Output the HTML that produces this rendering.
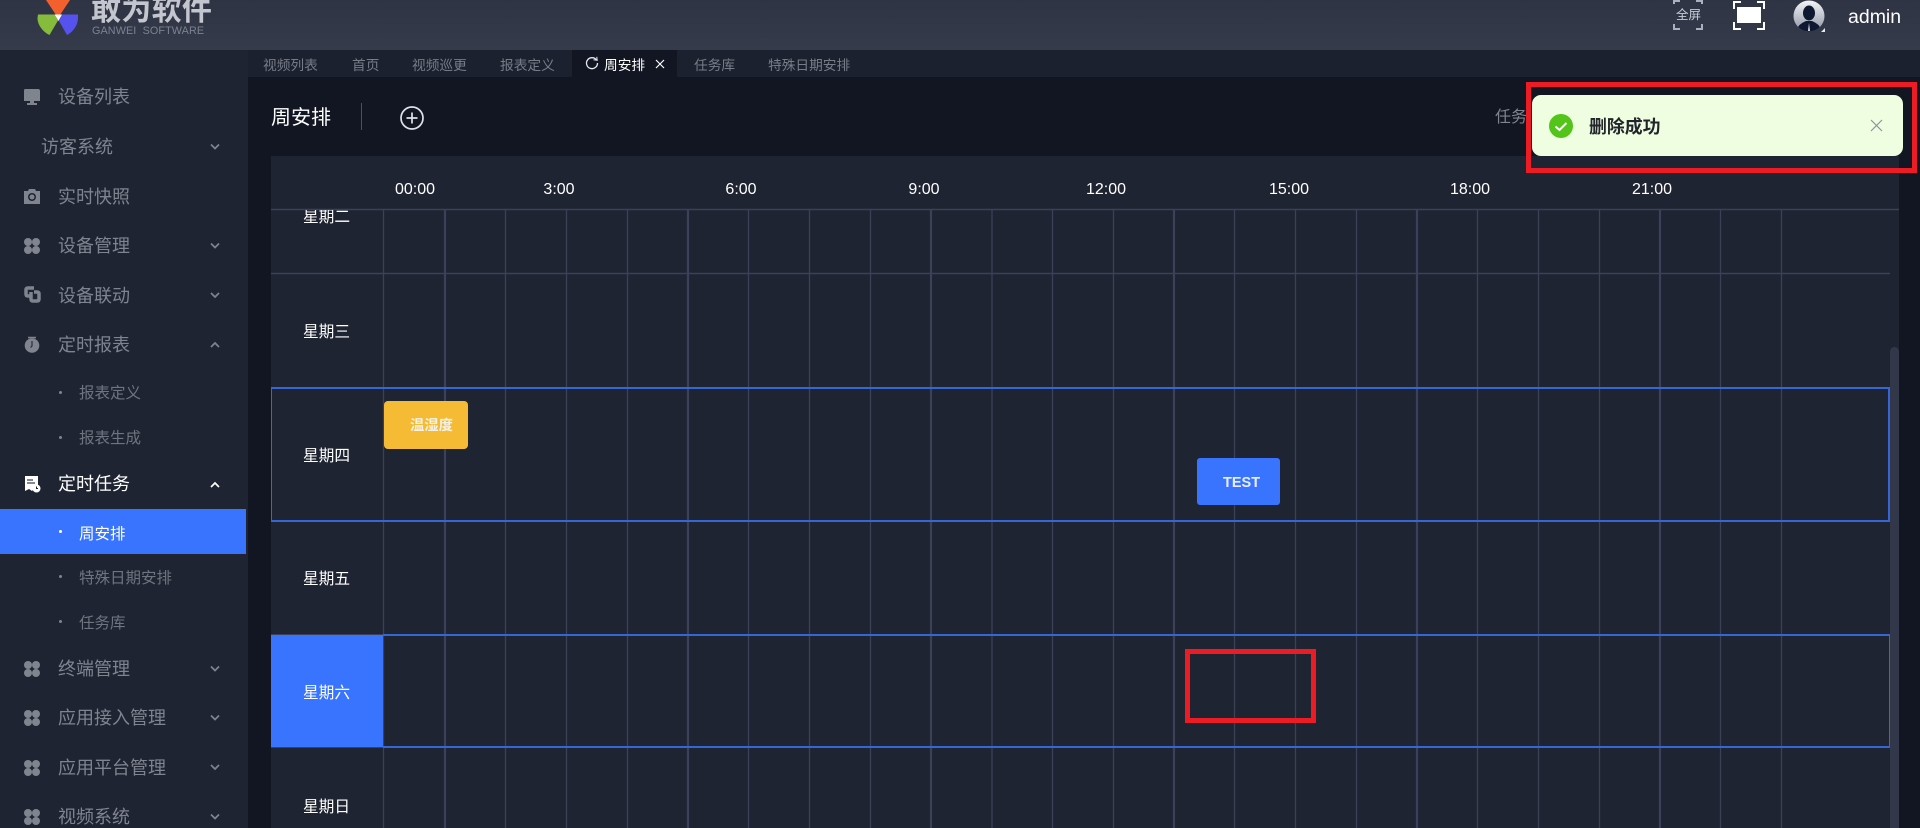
<!DOCTYPE html>
<html lang="zh">
<head>
<meta charset="utf-8">
<title>周安排</title>
<style>
html,body{margin:0;padding:0;width:1920px;height:828px;overflow:hidden;background:#121622;}
body{position:relative;font-family:"Liberation Sans","Noto Sans CJK SC",sans-serif;color:#fff;}
.a{position:absolute;}
.t{position:absolute;white-space:nowrap;line-height:24px;height:24px;}
.n{font-size:18px;color:#7f848f;left:58px;}
.s{font-size:15.5px;color:#6f747f;left:79px;}
.dot{position:absolute;left:59px;width:3px;height:3px;border-radius:50%;background:#7f848f;}
.tab{font-size:13.7px;color:#777c87;top:54px;}
.h{font-size:16px;color:#fff;top:178px;transform:translateX(-50%);}
.w{font-size:15.7px;color:#fff;left:32px;transform:none;}
svg{position:absolute;overflow:visible;}
</style>
</head>
<body>
<!-- header -->
<div class="a" style="left:0;top:0;width:1920px;height:50px;background:linear-gradient(#2f3444,#353b4b);overflow:hidden;">
  <svg style="left:0;top:0" width="100" height="50">
    <path d="M46 0H70L60 15H56Z" fill="#f1602d"/>
    <path d="M38 14.500H54.500L58 20.500L49.500 35C43 32 37.500 25 37.500 18Z" fill="#85bc3b"/>
    <path d="M62 14.500H78V18C78 25 73 32 67 35L59 21Z" fill="#5552ee"/>
    <path d="M54.500 14.500H62L58.500 21Z" fill="#fff"/>
  </svg>
  <div class="t" style="left:91px;top:-6px;font-size:30px;line-height:34px;height:34px;font-weight:700;letter-spacing:0.3px;color:#c3c6ce;">敢为软件</div>
  <div class="t" style="left:92px;top:19px;font-size:10.800px;color:#7d8291;letter-spacing:0.1px;">GANWEI&nbsp; SOFTWARE</div>
  <svg style="left:1673px;top:0" width="30" height="30" fill="none" stroke="#aab0bd" stroke-width="2">
    <path d="M1 4V1H7M23 1H29V4M1 24V29H7M23 29H29V24"/>
  </svg>
  <div class="t" style="left:1676px;top:3px;font-size:12.500px;color:#c8ccd4;">全屏</div>
  <svg style="left:1733px;top:1px" width="32" height="29" fill="none" stroke="#fff" stroke-width="2">
    <path d="M1 8V1H8M24 1H31V8M1 21V28H8M24 28H31V21"/>
    <rect x="4" y="6" width="24" height="16" fill="#fff" stroke="none"/>
  </svg>
  <svg style="left:1793px;top:0" width="33" height="33">
    <defs><linearGradient id="av" x1="0" y1="0" x2="0" y2="1"><stop offset="0" stop-color="#f2f3f5"/><stop offset="1" stop-color="#8f95a6"/></linearGradient>
    <clipPath id="avc"><circle cx="16" cy="16" r="15.500"/></clipPath></defs>
    <circle cx="16" cy="16" r="15.500" fill="url(#av)"/>
    <g clip-path="url(#avc)" fill="#0e1830">
      <ellipse cx="16" cy="13" rx="6" ry="7.500"/>
      <path d="M4 32C4 25 9 23 13 21H19C23 23 28 25 28 32Z"/>
    </g>
    <path d="M16 23l-1 8h2z" fill="#dfe2e8"/>
    <path d="M32 28v4h-4z" fill="#e6e8ee"/>
  </svg>
  <div class="t" style="left:1848px;top:5px;font-size:19.500px;color:#fff;">admin</div>
</div>

<!-- sidebar -->
<div class="a" style="left:0;top:50px;width:248px;height:778px;background:#1f2433;"></div>
<div class="a" style="left:0;top:509px;width:246px;height:45px;background:#3874ff;"></div>

<svg style="left:23px;top:89px" width="18" height="18" fill="#7f848f"><path d="M2 0H15Q17 0 17 2V12H1V2Q1 0 2 0Z"/><rect x="7" y="12" width="4" height="3"/><rect x="4" y="14" width="10" height="2"/></svg>
<svg style="left:23px;top:188px" width="18" height="18" fill="#7f848f"><path d="M1 3H5L6 1H12L13 3H17V16H1Z"/><circle cx="9" cy="9" r="4" fill="#1f2433"/><circle cx="9" cy="9" r="2.500"/></svg>
<svg style="left:23px;top:237px" width="18" height="18" fill="#7f848f"><circle cx="5" cy="5" r="4"/><circle cx="13" cy="5" r="4"/><circle cx="5" cy="13" r="4"/><circle cx="13" cy="13" r="4"/></svg>
<svg style="left:24px;top:286px" width="17" height="17" fill="none" stroke="#7f848f" stroke-width="3.500"><path d="M10 2H4Q2 2 2 4V8Q2 10 4 10H7"/><path d="M7 6V13Q7 15 9 15H13Q15 15 15 13V8Q15 6 13 6H10"/></svg>
<svg style="left:24px;top:336px" width="16" height="17"><circle cx="8" cy="9.500" r="7.300" fill="#7f848f"/><path d="M4 1.500H12" stroke="#7f848f" stroke-width="1.500"/><path d="M8 5V10L6.500 11.500" stroke="#2a2d3c" stroke-width="1.200" fill="none"/></svg>
<svg style="left:24px;top:475px" width="17" height="18"><path d="M1 1H14V16L11 13 8 16 5 14 1 16Z" fill="#fff"/><path d="M3 5H9M3 8H11" stroke="#3c4258" stroke-width="1.200"/><circle cx="12.500" cy="13.500" r="4" fill="#fff"/><path d="M12.500 11.500V13.500H14" stroke="#1f2433" fill="none"/></svg>
<svg style="left:23px;top:660px" width="18" height="18" fill="#7f848f"><circle cx="5" cy="5" r="4"/><circle cx="13" cy="5" r="4"/><circle cx="5" cy="13" r="4"/><circle cx="13" cy="13" r="4"/></svg>
<svg style="left:23px;top:709px" width="18" height="18" fill="#7f848f"><circle cx="5" cy="5" r="4"/><circle cx="13" cy="5" r="4"/><circle cx="5" cy="13" r="4"/><circle cx="13" cy="13" r="4"/></svg>
<svg style="left:23px;top:759px" width="18" height="18" fill="#7f848f"><circle cx="5" cy="5" r="4"/><circle cx="13" cy="5" r="4"/><circle cx="5" cy="13" r="4"/><circle cx="13" cy="13" r="4"/></svg>
<svg style="left:23px;top:808px" width="18" height="18" fill="#7f848f"><circle cx="5" cy="5" r="4"/><circle cx="13" cy="5" r="4"/><circle cx="5" cy="13" r="4"/><circle cx="13" cy="13" r="4"/></svg>

<div class="t n" style="top:85px;">设备列表</div>
<div class="t n" style="top:135px;left:41px;">访客系统</div>
<div class="t n" style="top:185px;">实时快照</div>
<div class="t n" style="top:234px;">设备管理</div>
<div class="t n" style="top:284px;">设备联动</div>
<div class="t n" style="top:333px;">定时报表</div>
<div class="dot" style="top:391px;"></div><div class="t s" style="top:382px;">报表定义</div>
<div class="dot" style="top:436px;"></div><div class="t s" style="top:427px;">报表生成</div>
<div class="t n" style="top:472px;color:#fff;">定时任务</div>
<div class="dot" style="top:530px;background:#fff;"></div><div class="t s" style="top:523px;color:#fff;">周安排</div>
<div class="dot" style="top:575px;"></div><div class="t s" style="top:567px;">特殊日期安排</div>
<div class="dot" style="top:620px;"></div><div class="t s" style="top:612px;">任务库</div>
<div class="t n" style="top:657px;">终端管理</div>
<div class="t n" style="top:706px;">应用接入管理</div>
<div class="t n" style="top:756px;">应用平台管理</div>
<div class="t n" style="top:805px;">视频系统</div>

<svg style="left:0;top:0" width="248" height="828" fill="none" stroke="#7f848f" stroke-width="1.700">
  <path d="M211 144.500l4 4 4-4"/>
  <path d="M211 243.500l4 4 4-4"/>
  <path d="M211 293l4 4 4-4"/>
  <path d="M219 347l-4-4-4 4"/>
  <path d="M219 487l-4-4-4 4" stroke="#fff"/>
  <path d="M211 666.500l4 4 4-4"/>
  <path d="M211 715.500l4 4 4-4"/>
  <path d="M211 765l4 4 4-4"/>
  <path d="M211 814.500l4 4 4-4"/>
</svg>

<!-- tabs -->
<div class="a" style="left:248px;top:50px;width:1672px;height:27px;background:#1c2130;"></div>
<div class="a" style="left:572px;top:50px;width:105px;height:27px;background:#121622;"></div>
<div class="t tab" style="left:263px;">视频列表</div>
<div class="t tab" style="left:352px;">首页</div>
<div class="t tab" style="left:412px;">视频巡更</div>
<div class="t tab" style="left:500px;">报表定义</div>
<svg style="left:585px;top:56px" width="14" height="14" fill="none" stroke="#e6e8ee" stroke-width="1.300"><path d="M11.500 4A5.500 5.500 0 1 0 12.500 7"/><path d="M8.500 3.700L12.200 4.300 11.800 0.800" stroke-width="1"/></svg>
<div class="t tab" style="left:604px;color:#fff;">周安排</div>
<svg style="left:655px;top:59px" width="10" height="10" fill="none" stroke="#fff" stroke-width="1.200"><path d="M1 1l8 8M9 1l-8 8"/></svg>
<div class="t tab" style="left:694px;">任务库</div>
<div class="t tab" style="left:768px;">特殊日期安排</div>

<!-- title row -->
<div class="t" style="left:271px;top:106px;font-size:20px;">周安排</div>
<div class="a" style="left:361px;top:103px;width:1px;height:27px;background:#4b5060;"></div>
<svg style="left:400px;top:106px" width="24" height="24" fill="none" stroke="#dfe2e8" stroke-width="1.700"><circle cx="12" cy="12" r="11"/><path d="M12 6.500V17.500M6.500 12H17.500"/></svg>
<div class="t" style="left:1495px;top:106px;font-size:16px;color:#7f848f;">任务</div>

<!-- calendar panel -->
<div class="a" style="left:271px;top:156px;width:1628px;height:672px;background:#1f2432;"></div>
<div class="a" style="left:1890px;top:347px;width:9px;height:481px;background:#32384a;border-radius:5px 5px 0 0;"></div>
<div class="t h" style="left:415px;">00:00</div>
<div class="t h" style="left:559px;">3:00</div>
<div class="t h" style="left:741px;">6:00</div>
<div class="t h" style="left:924px;">9:00</div>
<div class="t h" style="left:1106px;">12:00</div>
<div class="t h" style="left:1289px;">15:00</div>
<div class="t h" style="left:1470px;">18:00</div>
<div class="t h" style="left:1652px;">21:00</div>

<!-- grid -->
<svg style="left:0;top:0" width="1920" height="828" stroke="#3a4158" stroke-width="1.300">
  <path d="M271 209.500H1899" stroke-width="1.500"/>
  <path d="M271 273.500H1890" stroke-width="1.500"/>
  <path d="M383.500 210V828M505.500 210V828M566.500 210V828M627.500 210V828M748.500 210V828M809.500 210V828M870.500 210V828M992 210V828M1052.500 210V828M1113.500 210V828M1234.500 210V828M1295.500 210V828M1356.500 210V828M1477.500 210V828M1538.500 210V828M1599.500 210V828M1720.500 210V828M1781.500 210V828"/>
  <path d="M445 210V828M688 210V828M931 210V828M1174 210V828M1417 210V828M1660 210V828" stroke-width="2.200"/>
</svg>

<!-- rows -->
<div class="a" style="left:271px;top:210px;width:112px;height:618px;overflow:hidden;">
  <div class="t h w" style="top:-4px;">星期二</div>
  <div class="t h w" style="top:111px;">星期三</div>
  <div class="t h w" style="top:235px;">星期四</div>
  <div class="t h w" style="top:358px;">星期五</div>
  <div class="a" style="left:0;top:425px;width:112px;height:112px;background:#3874ff;"></div>
  <div class="t h w" style="top:472px;">星期六</div>
  <div class="t h w" style="top:586px;">星期日</div>
</div>
<div class="a" style="left:271px;top:387px;width:1615.5px;height:131px;border:2px solid #3466d6;border-left-width:1.500px;"></div>
<div class="a" style="left:383px;top:634px;width:1507px;height:2px;background:#3466d6;"></div>
<div class="a" style="left:383px;top:746px;width:1507px;height:2px;background:#3466d6;"></div>
<div class="a" style="left:271px;top:634px;width:112px;height:1px;background:#3a4158;"></div>
<div class="a" style="left:271px;top:747px;width:112px;height:1px;background:#3a4158;"></div>
<div class="a" style="left:1889px;top:635px;width:1px;height:112px;background:#3466d6;"></div>

<!-- events -->
<div class="a" style="left:384px;top:401px;width:84px;height:48px;background:#f5bb35;border-radius:4px;"></div>
<div class="t" style="left:410px;top:414px;font-size:14.300px;font-weight:700;color:#f4f1e6;">温湿度</div>
<div class="a" style="left:1197px;top:458px;width:83px;height:47px;background:#3874ff;border-radius:3px;"></div>
<div class="t" style="left:1223px;top:471px;font-size:14.500px;font-weight:700;color:#e9eeff;">TEST</div>

<!-- annotation boxes -->
<div class="a" style="left:1185px;top:649px;width:121px;height:64px;border:5px solid #ed1c24;"></div>
<div class="a" style="left:1526px;top:82px;width:381px;height:81px;border:5px solid #ed1c24;"></div>

<!-- toast -->
<div class="a" style="left:1532px;top:95px;width:371px;height:61px;background:#effee0;border-radius:9px;"></div>
<svg style="left:1549px;top:114px" width="24" height="24"><circle cx="12" cy="12" r="12" fill="#52c41a"/><path d="M6.500 12.500L10.500 16 17.500 9" fill="none" stroke="#fff" stroke-width="2"/></svg>
<div class="t" style="left:1589px;top:115px;font-size:17.900px;font-weight:700;color:#22252c;">删除成功</div>
<svg style="left:1871px;top:120px" width="11" height="11" fill="none" stroke="#8f949d" stroke-width="1.200"><path d="M0 0L11 11M11 0L0 11"/></svg>
</body>
</html>
